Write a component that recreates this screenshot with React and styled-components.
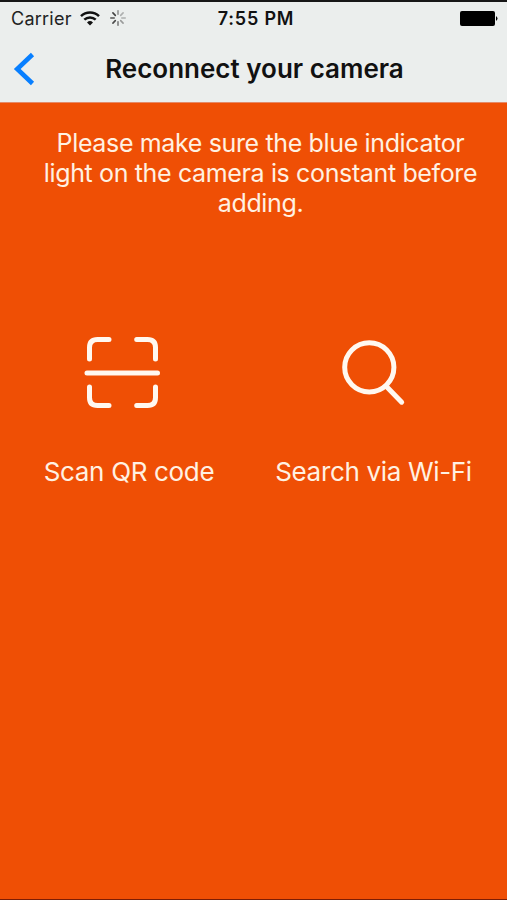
import React from 'react';
import styled, { createGlobalStyle } from 'styled-components';

const Global = createGlobalStyle`
  * { box-sizing: border-box; }
  body { margin: 0; background: #ef4f05; font-family: Inter, "Liberation Sans", sans-serif; }
`;
const Screen = styled.div`
  width: 507px;
  height: 900px;
  display: flex;
  flex-direction: column;
  background: #ef4f05;
  overflow: hidden;
  border-top: 2px solid #171717;
  border-bottom: 1px solid #7c1d05;
`;
const Header = styled.header`
  flex: 0 0 101px;
  background: #ebeeed;
  border-bottom: 1px solid #e58a68;
`;
const Status = styled.div`
  height: 33px;
  display: grid;
  grid-template-columns: 1fr auto 1fr;
  align-items: center;
  padding: 0 9px 0 14px;
`;
const StatusLeft = styled.div`
  display: flex;
  align-items: center;
  margin-left: -3px;
`;
const WifiIcon = styled.svg`
  margin-left: 8px;
`;
const Spinner = styled.svg`
  margin-left: 9px;
`;
const Battery = styled.svg`
  justify-self: end;
`;
const Nav = styled.div`
  height: 67px;
  display: grid;
  grid-template-columns: 93px 1fr 91px;
  align-items: center;
  justify-items: center;
`;
const Back = styled.button`
  justify-self: start;
  border: 0;
  background: none;
  padding: 0 0 0 13px;
  display: flex;
`;
const Content = styled.main`
  padding-top: 25px;
`;
const Message = styled.div`
  display: flex;
  flex-direction: column;
  align-items: center;
  padding-left: 14px;
`;
const Actions = styled.div`
  display: flex;
  margin-top: 115px;
`;
const Action = styled.div`
  flex: 0 0 ${p => p.$width}px;
  display: flex;
  flex-direction: column;
  align-items: center;
`;
const Icon = styled.svg`
  width: 80px;
  height: 80px;
  margin: 0 ${p => p.$right || 0}px 42px 0;
  fill: none;
  stroke: #fff8f0;
  stroke-width: 5;
  stroke-linecap: round;
`;
const Label = styled.span`
  display: block;
  white-space: nowrap;
  color: ${p => p.$color || '#fff1e2'};
  font-size: ${p => p.$size}px;
  line-height: ${p => p.$line}px;
  font-weight: ${p => p.$weight || 400};
  letter-spacing: ${p => p.$track || 0}px;
`;

const spokes = [0.45, 0.3, 0.3, 0.4, 0.55, 0.8, 0.75, 0.85];

export default function App() {
  return (
    <>
      <Global />
      <Screen>
        <Header>
          <Status>
            <StatusLeft>
              <Label $size={18} $line={24} $track={0.25} $color="#222">Carrier</Label>
              <WifiIcon width="20" height="15" viewBox="0 0 20 15" fill="none" stroke="#111" strokeWidth="2.5">
                <path d="M1 5.2a13 13 0 0 1 18 0M4.3 8.7a8.3 8.3 0 0 1 11.4 0" />
                <path d="M10 14.5l-3-3a4.4 4.4 0 0 1 6 0z" fill="#111" stroke="none" />
              </WifiIcon>
              <Spinner width="18" height="18" viewBox="-9 -8 18 18" stroke="#222" strokeWidth="1.6" strokeLinecap="round">
                {spokes.map((o, i) => (
                  <path key={i} d="M0-3.8V-7.2" opacity={o} transform={`rotate(${i * 45})`} />
                ))}
              </Spinner>
            </StatusLeft>
            <Label $size={18} $line={24} $weight={600} $track={0.8} $color="#111">7:55 PM</Label>
            <Battery width="38" height="16" viewBox="0 0 38 16">
              <rect width="35" height="15" rx="2" />
              <path d="M36 5q3 2.5 0 5z" />
            </Battery>
          </Status>
          <Nav>
            <Back aria-label="Back">
              <svg width="22" height="34" viewBox="0 0 22 34" fill="none" stroke="#087fff" strokeWidth="4.6">
                <path d="M19.5 2.5 4.2 17l15.3 14.5" />
              </svg>
            </Back>
            <Label $size={26} $line={34} $weight={600} $color="#111">Reconnect your camera</Label>
          </Nav>
        </Header>
        <Content>
          <Message>
            <Label $size={25} $line={30} $track={-0.36}>Please make sure the blue indicator</Label>
            <Label $size={25} $line={30} $track={-0.36}>light on the camera is constant before</Label>
            <Label $size={25} $line={30} $track={-0.36}>adding.</Label>
          </Message>
          <Actions>
            <Action $width={258}>
              <Icon viewBox="82 333 80 80" $right={14}>
                <path d="M89.5 359v-11.5q0-8 8-8H109M136.7 339.5h10.8q8 0 8 8V359M89.5 387v10.5q0 8 8 8H109M136.7 405.5h10.8q8 0 8-8V387M87 373h70.5" />
              </Icon>
              <Label $size={26} $line={34} $track={-0.33}>Scan QR code</Label>
            </Action>
            <Action $width={231}>
              <Icon viewBox="333 333 80 80" $right={2}>
                <circle cx="369.3" cy="367.3" r="24.6" />
                <path d="M386.2 386.2l15.5 16" />
              </Icon>
              <Label $size={26} $line={34} $track={-0.33}>Search via Wi-Fi</Label>
            </Action>
          </Actions>
        </Content>
      </Screen>
    </>
  );
}
